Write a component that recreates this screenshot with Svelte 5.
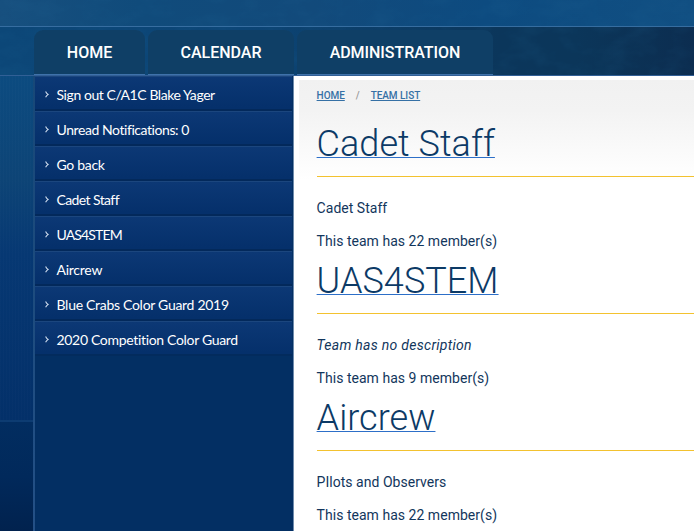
<script>
  const tabs = [
    { label: 'HOME', width: 111 },
    { label: 'CALENDAR', width: 146 },
    { label: 'ADMINISTRATION', width: 196 }
  ];
  const links = [
    { label: 'Sign out C/A1C Blake Yager', spacing: -0.43 },
    { label: 'Unread Notifications: 0', spacing: -0.43 },
    { label: 'Go back', spacing: -0.3 },
    { label: 'Cadet Staff', spacing: -0.6 },
    { label: 'UAS4STEM', spacing: -0.85 },
    { label: 'Aircrew', spacing: -0.25 },
    { label: 'Blue Crabs Color Guard 2019', spacing: -0.29 },
    { label: '2020 Competition Color Guard', spacing: -0.32 }
  ];
  const teams = [
    { name: 'Cadet Staff', description: 'Cadet Staff', members: 22 },
    { name: 'UAS4STEM', description: '', members: 9 },
    { name: 'Aircrew', description: 'PIlots and Observers', members: 22 }
  ];
</script>

<div class="page">
  <svg class="texture" width="694" height="76" aria-hidden="true">
    <filter id="grain" x="0" y="0" width="100%" height="100%">
      <feTurbulence type="fractalNoise" baseFrequency="0.035 0.06" numOctaves="5" seed="8" />
      <feColorMatrix values="0 0 0 0 0.02  0 0 0 0 0.16  0 0 0 0 0.34  1.2 0 0 0 -0.45" />
    </filter>
    <rect width="694" height="76" filter="url(#grain)" opacity="0.2" />
  </svg>
  <header></header>
  <nav>
    {#each tabs as tab}
      <a href="#top" style:width="{tab.width}px">{tab.label}</a>
    {/each}
  </nav>
  <div class="body">
    <div class="margin"><div class="upper"></div><div class="lower"></div></div>
    <aside>
      {#each links as link}
        <a href="#top">
          <svg width="4" height="7" viewBox="0 0 4 7"><path d="M.6.5 Q1.6 2.6 3.2 3.4 Q1.6 4.4.6 6.3" /></svg>
          <span style:letter-spacing="{link.spacing}px">{link.label}</span>
        </a>
      {/each}
    </aside>
    <main>
      <div class="content">
        <div class="crumbs"><a href="#top">HOME</a><i>/</i><a href="#top">TEAM LIST</a></div>
        {#each teams as team}
          <section>
            <h1><a href="#top">{team.name}</a></h1>
            {#if team.description}
              <p>{team.description}</p>
            {:else}
              <p><em>Team has no description</em></p>
            {/if}
            <p>This team has {team.members} member(s)</p>
          </section>
        {/each}
      </div>
    </main>
  </div>
</div>

<style>
  .page {
    position: relative;
    width: 694px;
    height: 531px;
    overflow: hidden;
    display: flex;
    flex-direction: column;
    background: #0c4a7d;
    font-family: Roboto, sans-serif;
  }
  .texture { position: absolute; left: 0; top: 0; z-index: 1; }
  header {
    height: 26px;
    flex: none;
    background: linear-gradient(90deg, #174f7e 0, #104b7b 20%, #124a7b 45%, #0d4b80 70%, #114f82 100%);
    border-bottom: 1px solid #376da0;
  }
  nav {
    box-sizing: border-box;
    height: 49px;
    flex: none;
    display: flex;
    gap: 3px;
    padding: 3px 0 0 34px;
    border-bottom: 1px solid #325f96;
    background: linear-gradient(90deg, #0c4778 0, #0c4576 35%, #0b365b 72%, #0b365a 83%, #0c2d50 100%);
  }
  nav a {
    position: relative;
    z-index: 2;
    box-sizing: border-box;
    height: 45px;
    border-radius: 9px 9px 0 0;
    background: linear-gradient(#0f3f66 44px, #3f72aa 44px);
    color: #fff;
    font-size: 16px;
    font-weight: 500;
    line-height: 46px;
    text-align: center;
    text-decoration: none;
    white-space: nowrap;
  }
  nav a:last-child { letter-spacing: -0.04px; }
  .body { flex: 1; display: flex; min-height: 0; }
  .margin { width: 33px; flex: none; display: flex; flex-direction: column; }
  .upper {
    height: 344px;
    background:
      repeating-linear-gradient(90deg, rgba(255,255,255,.012) 0 1px, transparent 1px 3px),
      linear-gradient(#0c4b80, #0d4476 30%, #063873 52%, #033069);
    border-bottom: 2px solid #0d3c72;
  }
  .lower { flex: 1; background: linear-gradient(#022d60, #01295b 50%, #01224e); }
  aside {
    width: 257px;
    flex: none;
    border-style: solid;
    border-width: 0 0 0 2px;
    border-image: linear-gradient(#174878, #245086) 1;
    background: #032f63;
    padding-right: 1px;
    display: flex;
    flex-direction: column;
  }
  aside a {
    box-sizing: border-box;
    height: 35px;
    flex: none;
    display: flex;
    align-items: center;
    gap: 7.5px;
    padding-left: 10px;
    background: linear-gradient(#0c3875, #05306b 94%);
    border-top: 1px solid #1b467e;
    border-bottom: 2px solid #03295b;
    color: #fff;
    font: 14px/20px "Gill Sans", "Gill Sans MT", Lato, sans-serif;
    text-decoration: none;
    white-space: nowrap;
  }
  aside a:last-child { border-bottom-color: #032b5d; }
  aside span { position: relative; top: 2px; }
  aside svg { position: relative; top: 1px; }
  aside svg path { fill: none; stroke: #cbd9eb; stroke-width: 1.1; }
  main {
    flex: 1;
    box-sizing: border-box;
    min-width: 0;
    border-left: 1px solid #6f8bac;
    background: #fff;
    padding: 4px 0 0 5px;
  }
  .content {
    padding: 9px 0 0 17.6px;
    background: linear-gradient(#f1f1f1, #f3f3f3 30px, #fff 100px);
  }
  .crumbs {
    height: 14px;
    line-height: 14px;
    font-size: 10px;
    font-weight: 500;
    color: #999;
    letter-spacing: -0.05px;
  }
  .crumbs a { color: #3570a5; text-underline-offset: 1px; text-decoration-skip-ink: none; }
  .crumbs i { font-style: normal; margin: 0 11px; }
  section { height: 137px; box-sizing: border-box; }
  h1 {
    box-sizing: border-box;
    height: 74px;
    margin: 0 0 21px;
    padding-top: 19px;
    border-bottom: 1px solid #f3c22f;
    font-size: 36px;
    font-weight: 300;
    line-height: 44px;
    letter-spacing: 0.05px;
  }
  h1 a { color: #0c3a66; text-decoration: underline #2d6fc8 1px; text-underline-offset: 1px; text-decoration-skip-ink: none; }
  p { margin: 0 0 13px; font-size: 14px; line-height: 20px; letter-spacing: 0.03px; color: #12365c; }
  em { letter-spacing: 0.28px; }
</style>
